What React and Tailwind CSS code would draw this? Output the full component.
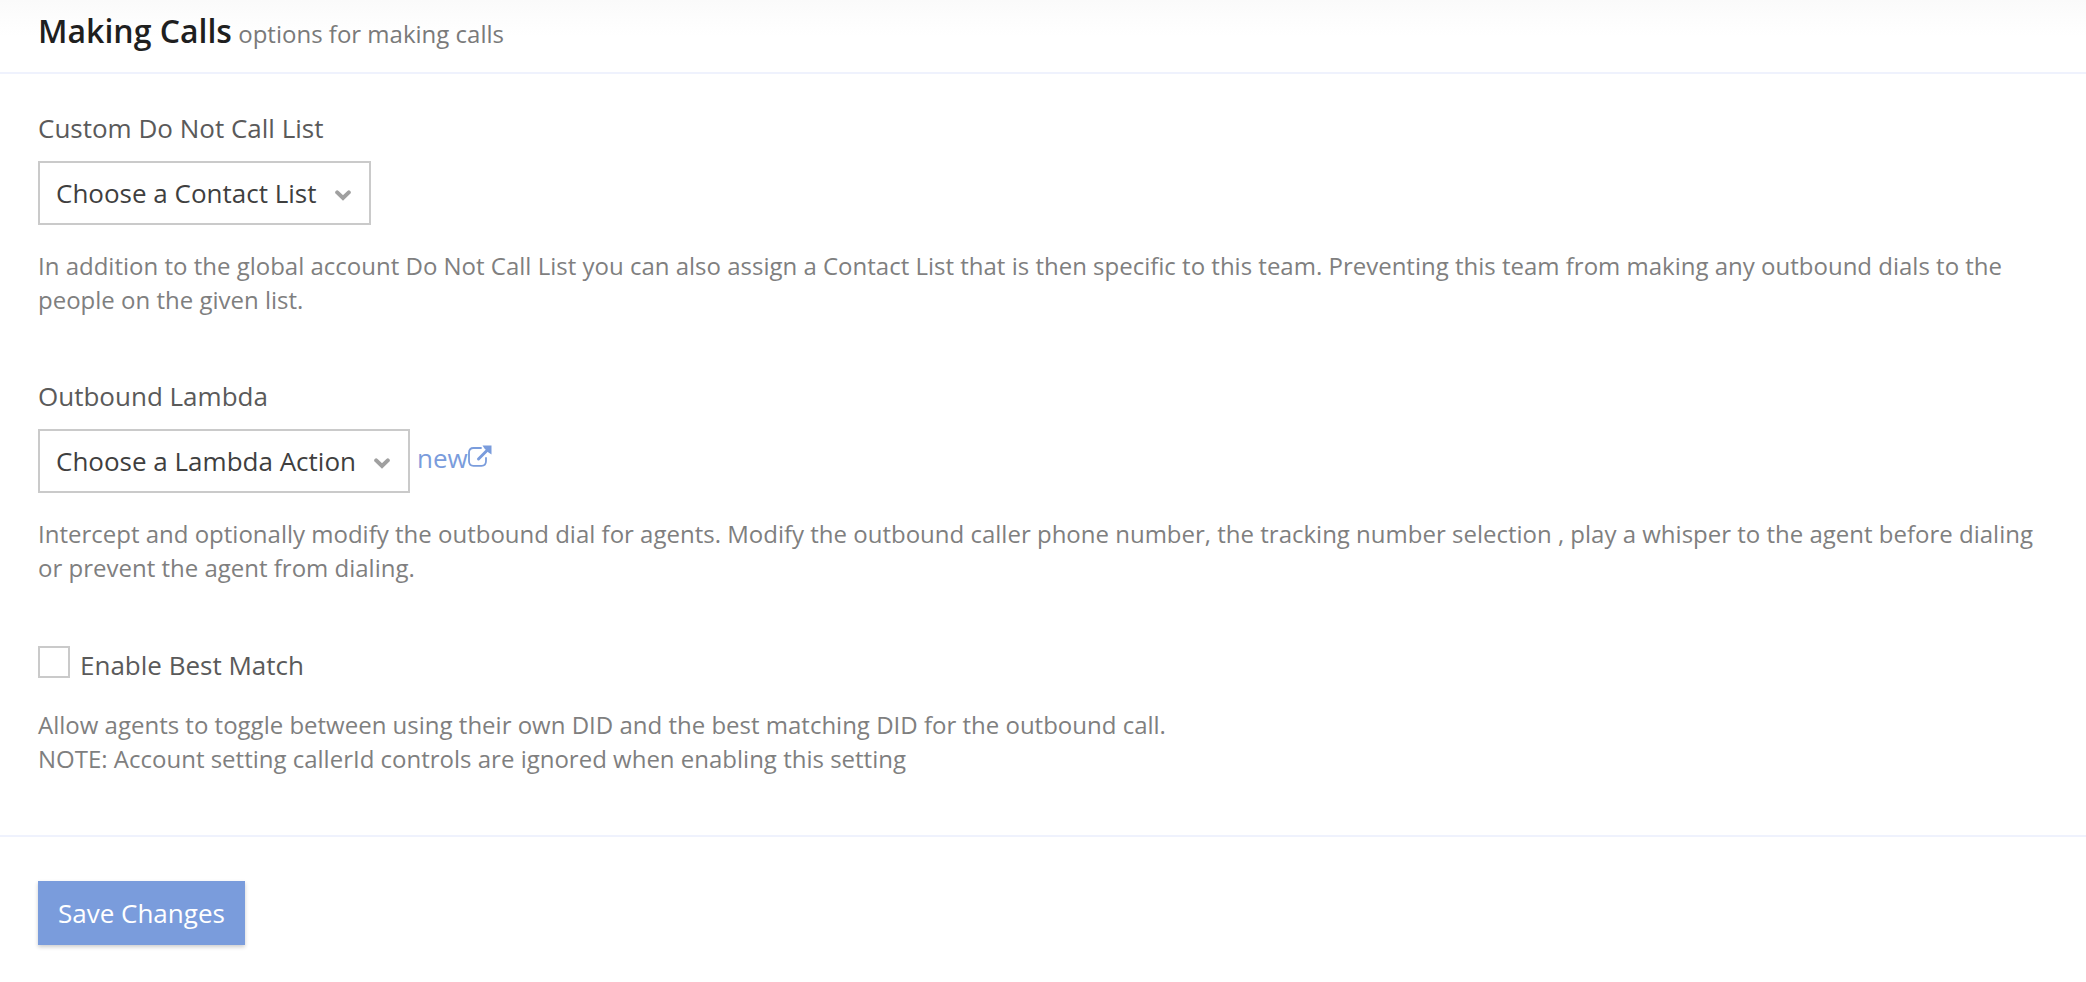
function Dropdown({ id, placeholder }) {
  return (
    <div className="relative">
      <select
        id={id}
        className="block h-16 appearance-none border-2 border-[#cacaca] bg-white pr-[52px] pl-4 text-[26px] text-[#3f3f3f]"
      >
        <option>{placeholder}</option>
      </select>
      <svg
        viewBox="0 0 16 11"
        className="pointer-events-none absolute top-[29px] right-5 h-[11px] w-4"
        fill="none"
        stroke="#a0a0a0"
        strokeWidth="4"
        strokeLinecap="round"
        strokeLinejoin="miter"
        aria-hidden="true"
      >
        <path d="M2.2 2.4 8 8l5.8-5.6" />
      </svg>
    </div>
  );
}

function HelpText({ children }) {
  return <p className="text-2xl leading-[34px] text-[#7f7f7f]">{children}</p>;
}

function ExternalLinkIcon() {
  return (
    <svg viewBox="0 0 24 22" className="mb-1 h-[22px] w-6" fill="none" stroke="#7a9cdc" aria-hidden="true">
      <path
        d="M13 3H5.500Q1 3 1 7.500V16Q1 20.800 5.500 20.800H13.500Q18 20.800 18 16V13"
        strokeWidth="1.8"
        strokeLinecap="round"
      />
      <path d="M10.500 14 19 5.500" strokeWidth="3" strokeLinecap="round" />
      <path d="M14.500 0.500H23.500V9.500L20.500 7.500L16.500 3.500Z" fill="#7a9cdc" stroke="none" />
    </svg>
  );
}

export default function App() {
  return (
    <main className="min-h-screen bg-white font-['Open_Sans',sans-serif] text-[#5a5a5a]">
      <header className="border-b-2 border-[#eff2fd] bg-linear-to-b from-[#fafafa] to-white to-50% px-[38px] pt-[9px] pb-[19px]">
        <h1 className="text-[32px] leading-11 font-semibold text-[#1f1f1f]">
          Making Calls <small className="-ml-0.5 text-2xl leading-8 font-normal text-[#7a7a7a]">options for making calls</small>
        </h1>
      </header>
      <form onSubmit={(event) => event.preventDefault()}>
        <div className="flex flex-col gap-[61px] px-[38px] pt-9 pb-[59px]">
          <section className="flex flex-col items-start">
            <label htmlFor="contact-list" className="mb-[15px] text-[26px] leading-9">
              Custom Do Not Call List
            </label>
            <Dropdown id="contact-list" placeholder="Choose a Contact List" />
            <div className="mt-6">
              <HelpText>
                In addition to the global account Do Not Call List you can also assign a Contact List that is then
                specific to this team. Preventing this team from making any outbound dials to the people on the given
                list.
              </HelpText>
            </div>
          </section>
          <section className="flex flex-col items-start">
            <label htmlFor="lambda-action" className="mb-[15px] text-[26px] leading-9">
              Outbound Lambda
            </label>
            <div className="flex items-center gap-[7px]">
              <Dropdown id="lambda-action" placeholder="Choose a Lambda Action" />
              <a href="#new" className="flex items-center pb-1.5 text-[26px] leading-9 text-[#7a9cdc]">
                new
                <ExternalLinkIcon />
              </a>
            </div>
            <div className="mt-6">
              <HelpText>
                Intercept and optionally modify the outbound dial for agents. Modify the outbound caller phone number,
                the tracking number selection , play a whisper to the agent before dialing or prevent the agent from
                dialing.
              </HelpText>
            </div>
          </section>
          <section>
            <div className="flex items-start gap-[10px]">
              <input
                id="best-match"
                type="checkbox"
                className="size-8 appearance-none border-2 border-[#cacaca] bg-white checked:bg-[#7a9cdc]"
              />
              <label htmlFor="best-match" className="text-[26px] leading-[38px]">
                Enable Best Match
              </label>
            </div>
            <div className="mt-6">
              <HelpText>
                Allow agents to toggle between using their own DID and the best matching DID for the outbound call.
                <br />
                NOTE: Account setting callerId controls are ignored when enabling this setting
              </HelpText>
            </div>
          </section>
        </div>
        <footer className="border-t-2 border-[#eff2fd] px-[38px] pt-11 pb-9">
          <button
            type="submit"
            className="block h-16 bg-[#7a9cdc] px-5 text-[26px] text-white shadow-[0_2px_4px_rgba(0,0,0,0.2)]"
          >
            Save Changes
          </button>
        </footer>
      </form>
    </main>
  );
}
